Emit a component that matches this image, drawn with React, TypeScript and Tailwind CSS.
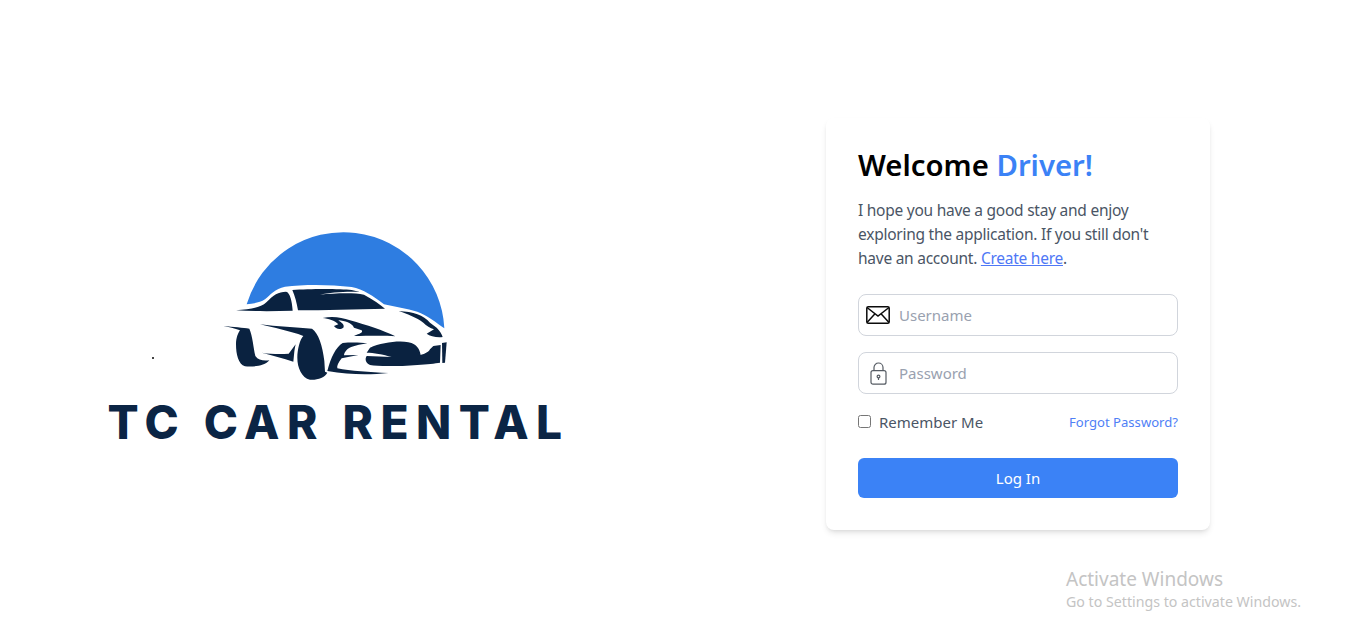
import React from 'react';

const CarLogo: React.FC = () => (
  <svg viewBox="0 0 750 510" className="w-[250px] h-[170px]">
    <path
      fill="#2e7de1"
      d="M110 250 A303 303 0 0 1 703 322 C680 305 650 282 622 272 C590 262 555 258 522 250 C490 225 460 205 425 198 C360 190 280 190 225 197 C195 203 180 222 165 235 C150 245 130 248 110 250Z"
    />
    <g fill="#0a2240">
      <path d="M78 268 C120 264 150 262 170 243 C190 222 205 212 228 212 C240 214 246 240 248 269 C190 271 130 271 78 268Z" />
      <path d="M247 207 C300 203 390 203 425 207 L450 213 C410 211 360 214 330 221 C370 217 430 214 462 221 C490 236 510 250 525 263 C440 264 340 268 264 268 C260 245 255 225 247 207Z" />
      <path d="M338 291 C370 285 395 290 420 298 C470 312 520 328 556 346 C520 343 470 345 432 345 C450 338 460 335 455 328 L432 320 C425 305 405 300 385 298 C395 305 405 312 400 320 C390 328 375 322 372 315 L385 310 C375 298 355 293 338 291Z" />
      <path d="M566 270 C610 272 640 282 660 305 L680 320 C690 330 695 338 698 348 C680 350 660 346 650 338 L672 325 C660 320 650 316 640 305 C620 290 590 278 566 270Z" />
      <path d="M40 315 C70 318 100 320 118 323 C128 345 130 380 136 405 C145 418 160 420 178 418 C165 435 130 438 105 436 C85 430 78 400 78 370 C78 350 85 335 90 328 C75 322 55 318 40 315Z" />
      <path d="M155 395 C185 400 215 400 236 398 L257 370 C252 390 252 410 250 422 C220 412 185 402 155 395Z" />
      <path d="M150 310 C200 316 260 320 306 323 C325 335 338 375 343 420 L345 452 L352 455 C345 470 320 478 300 476 C275 470 262 440 262 410 C262 385 270 355 280 345 C240 330 190 320 150 310Z" />
      <path d="M352 450 C362 410 378 378 398 366 C420 364 450 364 472 367 C450 370 425 375 412 385 C405 392 402 398 402 403 L445 402 L395 412 C385 425 380 435 382 442 C420 450 480 454 535 456 C480 462 420 462 352 450Z" />
      <path d="M480 380 C520 362 590 355 612 370 C625 378 630 390 632 402 C640 400 655 395 660 385 L670 375 L692 372 L690 425 C650 432 520 440 480 432 C465 425 465 412 470 405 L545 408 C520 400 490 395 470 395Z" />
      <path d="M696 366 L710 364 L705 425 L697 426Z" />
    </g>
  </svg>
);

const MailIcon: React.FC = () => (
  <svg viewBox="0 0 24 18" className="w-6 h-[18px] shrink-0" fill="none" stroke="#0b0b0b" strokeWidth="1.5">
    <rect x="0.8" y="0.8" width="22.4" height="16.4" rx="1.5" />
    <path d="M1 1.5 L12 10 L23 1.5 M1 16.5 L9 7.8 M23 16.5 L15 7.8" />
  </svg>
);

const LockIcon: React.FC = () => (
  <svg viewBox="0 0 17 23" className="w-[17px] h-[23px] shrink-0" fill="none" stroke="#555b63" strokeWidth="1.2">
    <rect x="1" y="8.6" width="15" height="13.6" rx="2" />
    <path d="M4 8.6 V5.5 a4.5 4.5 0 0 1 9 0 V8.6" />
    <circle cx="8.5" cy="14.5" r="1.4" />
    <path d="M8.5 16 V18" />
  </svg>
);

const App: React.FC = () => {
  return (
    <div className="relative w-full h-[641px] bg-white overflow-hidden font-['Noto_Sans',sans-serif]">
      <div className="flex items-start">
        <div className="w-[826px] pl-[108px] pt-[221px]">
          <div className="relative w-[454px] flex flex-col items-center">
            <CarLogo />
            <span className="absolute left-[44px] top-[136px] w-[2px] h-[2px] bg-[#444]"></span>
            <div className="mt-[4px] -mr-[7px] whitespace-nowrap font-['Inter',sans-serif] font-extrabold text-[46px] leading-[54px] tracking-[7.5px] text-[#0b2545]">
              TC CAR RENTAL
            </div>
          </div>
        </div>

        <div className="mt-[118px] w-[384px] bg-white rounded-lg shadow-md p-8">
          <h1 className="text-[29.3px] leading-[30px] font-semibold text-black">
            Welcome <span className="text-[#3b82f6]">Driver!</span>
          </h1>
          <p className="mt-[18px] text-[15.5px] leading-6 tracking-[-0.25px] text-gray-600">
            I hope you have a good stay and enjoy exploring the application. If you still don't have an account.{' '}
            <a href="#" className="text-[#4f78f6] underline">Create here</a>.
          </p>

          <div className="mt-6 flex items-center gap-[9px] h-[42px] px-[7px] border border-gray-300 rounded-lg">
            <MailIcon />
            <input placeholder="Username" className="w-full outline-none text-[15px] placeholder:text-gray-400" />
          </div>
          <div className="mt-4 flex items-center gap-3 h-[42px] pl-[11px] pr-2 border border-gray-300 rounded-lg">
            <LockIcon />
            <input placeholder="Password" className="w-full outline-none text-[15px] placeholder:text-gray-400" />
          </div>

          <div className="mt-4 flex items-center justify-between h-6">
            <label className="flex items-center gap-2 text-[15px] text-gray-600">
              <input type="checkbox" className="mb-[2px]" />
              Remember Me
            </label>
            <a href="#" className="mt-[2px] text-[13.1px] text-[#4f7ff6]">Forgot Password?</a>
          </div>

          <button className="mt-6 w-full h-10 bg-[#3b82f6] text-white text-[15px] rounded-md">Log In</button>
        </div>
      </div>

      <div className="absolute left-[1066px] top-[567px] text-[#c4c4c4]">
        <div className="text-[19px] leading-6">Activate Windows</div>
        <div className="text-[14.2px] leading-[22px]">Go to Settings to activate Windows.</div>
      </div>
    </div>
  );
};

export default App;
